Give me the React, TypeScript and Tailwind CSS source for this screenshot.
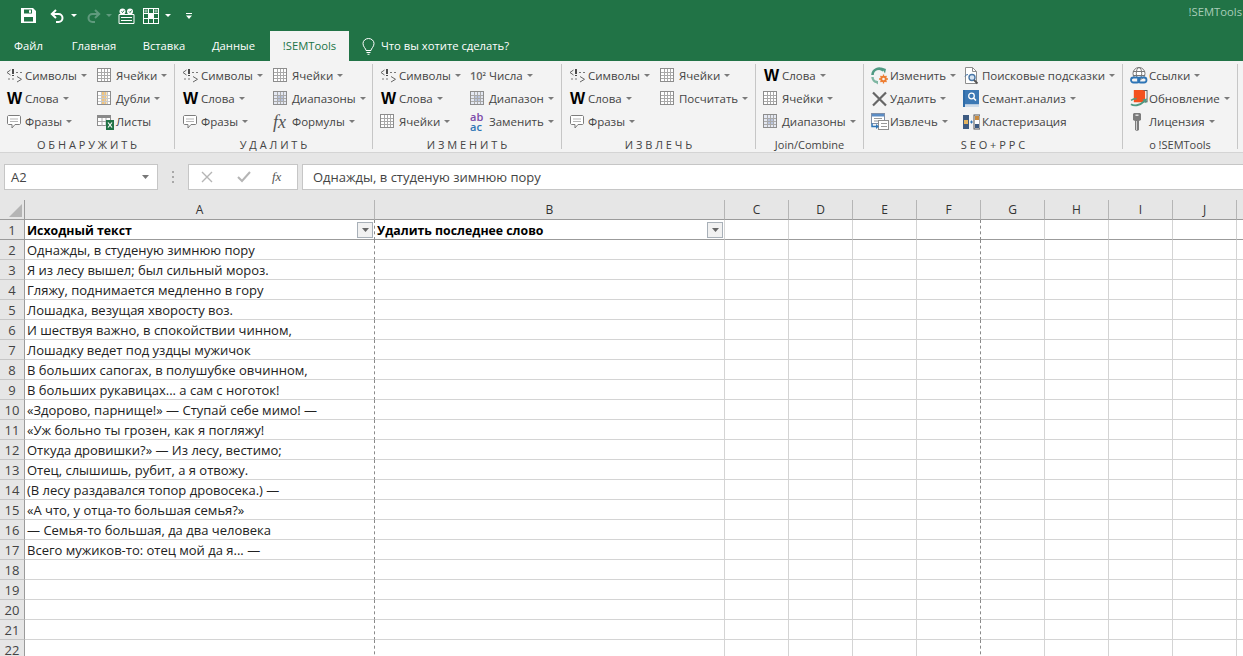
import type { ReactNode } from 'react';

const poem = [
  'Однажды, в студеную зимнюю пору',
  'Я из лесу вышел; был сильный мороз.',
  'Гляжу, поднимается медленно в гору',
  'Лошадка, везущая хворосту воз.',
  'И шествуя важно, в спокойствии чинном,',
  'Лошадку ведет под уздцы мужичок',
  'В больших сапогах, в полушубке овчинном,',
  'В больших рукавицах... а сам с ноготок!',
  '«Здорово, парнище!» — Ступай себе мимо! —',
  '«Уж больно ты грозен, как я погляжу!',
  'Откуда дровишки?» — Из лесу, вестимо;',
  'Отец, слышишь, рубит, а я отвожу.',
  '(В лесу раздавался топор дровосека.) —',
  '«А что, у отца-то большая семья?»',
  '— Семья-то большая, да два человека',
  'Всего мужиков-то: отец мой да я... —',
];

const extraCols = ['C', 'D', 'E', 'F', 'G', 'H', 'I', 'J', ''];

function Caret({ color = '#7a7a7a', big = false }: { color?: string; big?: boolean }) {
  return (
    <svg width={big ? 7 : 6} height={big ? 4 : 3} viewBox="0 0 7 4" preserveAspectRatio="none" className="shrink-0">
      <path d="M0 0h7L3.5 4z" fill={color} />
    </svg>
  );
}

/* ribbon icons */
const SymbolsIcon = () => (
  <svg width="17" height="16" viewBox="0 0 17 16" fill="none">
    <path d="M4.500 2 1 4.500 4.500 7" stroke="#666" />
    <path d="M7 1v5M7 7v1" stroke="#222" strokeWidth="1.600" />
    <path d="M10 4.500h2M14 4.500h2M2 11h2M6 11h2" stroke="#777" />
    <path d="M11 8.500l4.500 2.800L11 14" stroke="#666" />
  </svg>
);

const WordIcon = () => (
  <span className="ml-px block text-[16px] leading-4 font-bold text-black font-['Liberation_Sans',sans-serif]">W</span>
);

const PhraseIcon = () => (
  <svg width="16" height="16" viewBox="0 0 16 16" fill="none">
    <path d="M2.500 1.500h11a1.500 1.500 0 0 1 1 1v7a1.500 1.500 0 0 1-1 1H9l-3 3.500v-3.500H2.500a1.500 1.500 0 0 1-1-1v-7a1.500 1.500 0 0 1 1-1z" stroke="#7d7d7d" fill="#fff" />
    <path d="M4 5h8M4 7.500h8" stroke="#b5b5b5" />
  </svg>
);

function CellsIcon({ variant = 'plain' }: { variant?: 'plain' | 'orange' | 'blue' }) {
  const lines = [4, 7, 10];
  return (
    <svg width="15" height="15" viewBox="0 0 15 15" fill="none">
      <rect x="0.500" y="0.500" width="13" height="13" fill={variant === 'blue' ? '#e4e8f2' : '#fff'} stroke="#8d8d8d" />
      {variant === 'orange' && <rect x="5" y="1" width="4.500" height="12" fill="#f2c47c" />}
      {variant === 'blue' && <rect x="4" y="4" width="6" height="6" fill="#b9c4dc" />}
      {lines.map((p) => (
        <path key={p} d={`M${p + 0.5} 1v12M1 ${p + 0.5}h12`} stroke={variant === 'orange' ? '#c9c9c9' : '#a9a9a9'} />
      ))}
    </svg>
  );
}

const SheetsIcon = () => (
  <svg width="18" height="16" viewBox="0 0 18 16" fill="none">
    <rect x="0.500" y="1.500" width="13" height="10" fill="#fff" stroke="#8d8d8d" />
    <rect x="0" y="1" width="14" height="3" fill="#8a8a8a" />
    <path d="M5 4v8M9 4v8M1 7.500h12" stroke="#aaa" />
    <rect x="9" y="6" width="8" height="10" fill="#217346" />
    <path d="M11 8.500l4 5M15 8.500l-4 5" stroke="#fff" strokeWidth="1.200" />
  </svg>
);

const FxIcon = () => (
  <span className="block text-[18px] leading-4 italic text-[#555] font-['Liberation_Serif',serif]">fx</span>
);

const TenIcon = () => (
  <span className="flex items-start text-[11px] leading-3 font-semibold text-[#666] font-['Open_Sans',sans-serif]">
    10<span className="text-[6px] leading-2 font-normal text-black">2</span>
  </span>
);

const ReplaceIcon = () => (
  <span className="flex flex-col text-[11px] leading-[10px] font-semibold font-['Open_Sans',sans-serif]">
    <span className="text-[#7b4aa8]">ab</span>
    <span className="text-[#2e75b6]">ac</span>
  </span>
);

const ChangeIcon = () => (
  <svg width="18" height="18" viewBox="0 0 18 18" fill="none">
    <path d="M1.500 8A6.500 6.500 0 0 1 12.500 3.500" stroke="#4f9a83" strokeWidth="2.600" />
    <path d="M10.500 0.500l4.500 1.500-1 4.500z" fill="#4f9a83" />
    <path d="M1.500 10A5 5 0 0 0 6 15" stroke="#7fb7a3" strokeWidth="2.400" />
    <path d="M2.500 14h4.500v3.500z" fill="#7fb7a3" />
    <circle cx="12.500" cy="12" r="3.200" fill="#ed7d31" />
    <path d="M12.500 7.500v9M8 12h9M9.500 9l6 6M15.500 9l-6 6" stroke="#ed7d31" strokeWidth="1.300" />
    <circle cx="12.500" cy="12" r="1.300" fill="#f3f3f3" />
  </svg>
);

const CrossIcon = () => (
  <svg width="17" height="16" viewBox="0 0 17 16" fill="none">
    <path d="M2 1.500l13 13M15 1.500l-13 13" stroke="#666" strokeWidth="2.200" />
  </svg>
);

const ExtractIcon = () => (
  <svg width="18" height="17" viewBox="0 0 18 17" fill="none">
    <rect x="0.500" y="0.500" width="13" height="10" fill="#fff" stroke="#7f8fa8" />
    <rect x="1" y="1" width="12" height="2.500" fill="#5b8cc4" />
    <path d="M3 5.500h8M3 8h5" stroke="#999" />
    <rect x="7.500" y="7.500" width="10" height="9" fill="#fff" stroke="#8d8d8d" />
    <path d="M10 10.500h6M10 13.500h6" stroke="#999" />
    <path d="M1 10.500v3h5" stroke="#2e75b6" strokeWidth="1.500" />
    <path d="M5 11l3 2.500L5 16z" fill="#2e75b6" />
  </svg>
);

const SearchDocIcon = () => (
  <svg width="17" height="18" viewBox="0 0 17 18" fill="none">
    <path d="M2.500 0.500h7l4 4v12h-11z" fill="#fff" stroke="#8d8d8d" />
    <path d="M9.500 0.500v4h4" stroke="#8d8d8d" />
    <circle cx="9" cy="10.500" r="3" fill="#d5e3f1" stroke="#4a78a8" strokeWidth="1.400" />
    <path d="M11 13l3.500 3.500" stroke="#555" strokeWidth="1.800" />
    <path d="M2 9.500a3 3 0 0 1 3-2" stroke="#4a78a8" />
  </svg>
);

const BookIcon = () => (
  <svg width="16" height="17" viewBox="0 0 16 17" fill="none">
    <rect x="0" y="0" width="2" height="17" fill="#2f6ca8" />
    <rect x="2" y="0" width="14" height="14.500" fill="#3c78b4" />
    <rect x="2" y="14.500" width="14" height="2.500" fill="#cfdcea" />
    <circle cx="8.500" cy="6" r="2.800" stroke="#fff" strokeWidth="1.300" />
    <path d="M10.500 8l2.500 2.500" stroke="#fff" strokeWidth="1.500" />
  </svg>
);

const ClusterIcon = () => (
  <svg width="17" height="16" viewBox="0 0 17 16" fill="none">
    <rect x="0" y="1" width="6" height="14" fill="#3d5a80" />
    <rect x="1" y="6" width="4" height="4" fill="#e3b35f" />
    <rect x="11" y="1" width="6" height="14" fill="#fff" stroke="#555" />
    <rect x="12" y="2" width="4" height="4" fill="#c98a3c" />
    <rect x="12" y="10" width="4" height="4" fill="#3d5a80" />
    <path d="M7 8h3M8.500 6.500v3" stroke="#2e75b6" />
  </svg>
);

const LinksIcon = () => (
  <svg width="18" height="18" viewBox="0 0 18 18" fill="none">
    <circle cx="9" cy="6.500" r="6" fill="#fff" stroke="#777" />
    <ellipse cx="9" cy="6.500" rx="2.700" ry="6" stroke="#777" />
    <path d="M3 4.500h12M3 8.500h12" stroke="#777" />
    <rect x="1" y="10.500" width="8.500" height="5" rx="2.500" stroke="#2e75b6" strokeWidth="1.800" fill="#f3f3f3" />
    <rect x="8" y="10.500" width="8.500" height="5" rx="2.500" stroke="#2e75b6" strokeWidth="1.800" />
  </svg>
);

const UpdateIcon = () => (
  <svg width="18" height="17" viewBox="0 0 19 18" fill="none">
    <rect x="12" y="0.500" width="6" height="12" fill="#fff" stroke="#555" />
    <path d="M4 0h9l3 1v10l-4 2H4z" fill="#f4511e" />
    <path d="M1 15c3 2 9 2 14-3" stroke="#4f9a83" strokeWidth="2" />
    <path d="M13 10l5-1-1 5z" fill="#4f9a83" />
    <path d="M1 11c2-1.500 4-2 6-2" stroke="#4f9a83" strokeWidth="1.500" />
  </svg>
);

const KeyIcon = () => (
  <svg width="14" height="18" viewBox="0 0 14 18" fill="none">
    <path d="M4 0h6l1 1v6l-2 1v9l-2 1-2-1V8L3 7V1z" fill="#7c7c7c" />
    <rect x="5.500" y="1.500" width="3" height="1.500" fill="#ddd" />
    <path d="M6.500 8v9" stroke="#d0d0d0" />
  </svg>
);

function Item({ icon, label, caret = true }: { icon: ReactNode; label: string; caret?: boolean }) {
  return (
    <div className="flex h-[23px] items-center">
      <div className="flex h-[18px] w-[19px] shrink-0 items-center">{icon}</div>
      <span className="whitespace-nowrap">{label}</span>
      {caret && (
        <span className="ml-[4px]">
          <Caret />
        </span>
      )}
    </div>
  );
}

function Group({ title, width, pad = 'pl-[7px]', first, second, firstWidth }: {
  title: string;
  width: string;
  pad?: string;
  first: ReactNode;
  second?: ReactNode;
  firstWidth?: string;
}) {
  return (
    <div className={`flex h-[85px] shrink-0 flex-col border-r border-[#c6c6c6] ${width}`}>
      <div className={`flex h-[69px] shrink-0 ${pad}`}>
        <div className={`flex flex-col ${firstWidth ?? ''}`}>{first}</div>
        {second && <div className="flex flex-col">{second}</div>}
      </div>
      <div className="mt-1 flex h-[16px] shrink-0 items-center justify-center whitespace-nowrap text-[11px] leading-4 text-[#444]">{title}</div>
    </div>
  );
}

function FilterButton() {
  return (
    <span className="flex h-4 w-4 shrink-0 items-center justify-center border border-[#a8b0b8] bg-[#f1f1f1]">
      <Caret color="#666" big />
    </span>
  );
}

export default function App() {
  return (
    <div className="h-[656px] w-[1243px] overflow-hidden bg-white font-['Open_Sans',sans-serif] text-[11.5px] text-[#444]">
      {/* quick access */}
      <div className="flex h-[31px] items-center justify-between bg-[#217346] pl-[21px]">
        <div className="flex items-center">
          <svg width="15" height="15" viewBox="0 0 15 15">
            <path fillRule="evenodd" d="M0 0h12l3 3v12H0zM3 1.500v4h8v-4zM3 9v4.500h9V9zM8 2.200h2v2.600H8z" fill="#fff" />
          </svg>
          <svg width="16" height="14" viewBox="0 0 16 14" fill="none" className="ml-[14px]">
            <path d="M6 1 1.800 5 6 9" stroke="#fff" strokeWidth="2" />
            <path d="M2 5h6.500a4 4 0 0 1 0 8H6" stroke="#fff" strokeWidth="2" />
          </svg>
          <span className="ml-[5px]"><Caret color="#fff" /></span>
          <svg width="16" height="14" viewBox="0 0 16 14" fill="none" className="ml-[8px]">
            <path d="M10 1l4.200 4L10 9" stroke="#5f9a7d" strokeWidth="2" />
            <path d="M14 5H7.500a4 4 0 0 0 0 8H10" stroke="#5f9a7d" strokeWidth="2" />
          </svg>
          <span className="ml-[5px]"><Caret color="#5f9a7d" /></span>
          <svg width="17" height="16" viewBox="0 0 17 16" fill="none" className="ml-[6px]">
            <path d="M1 6.500h15v9H1z" stroke="#fff" />
            <path d="M3 9.500h11M3 12.500h11" stroke="#fff" />
            <circle cx="4.500" cy="3.500" r="3" fill="#fff" />
            <circle cx="12" cy="3.500" r="3" fill="#fff" />
            <path d="M3.500 3.500l1 1 1.500-2M11 3.500l1 1 1.500-2" stroke="#217346" />
          </svg>
          <svg width="17" height="16" viewBox="0 0 17 16" fill="none" className="ml-[8px]">
            <rect x="0.500" y="0.500" width="15" height="15" stroke="#fff" />
            <path d="M5.500 1v14M10.500 1v14M1 5.500h14M1 10.500h14" stroke="#fff" />
            <rect x="6" y="6" width="4.500" height="4.500" fill="#fff" />
            <rect x="1.500" y="1.500" width="3" height="3" fill="#8fbba3" />
            <rect x="11.500" y="1.500" width="3" height="3" fill="#8fbba3" />
          </svg>
          <span className="ml-[5px]"><Caret color="#fff" /></span>
          <svg width="6" height="6" viewBox="0 0 6 6" className="ml-[15px]">
            <path d="M0 0h6v1H0zM0 2.500h6L3 6z" fill="#fff" />
          </svg>
        </div>
        <span className="pr-px pb-[6px] text-[11.25px] whitespace-nowrap text-[#a9cdb9]">!SEMTools</span>
      </div>

      {/* tabs */}
      <div className="flex h-[30px] items-end bg-[#217346] text-center text-[11.25px] text-white">
        <div className="h-[30px] w-[57px] leading-[29px]">Файл</div>
        <div className="h-[30px] w-[74px] leading-[29px]">Главная</div>
        <div className="h-[30px] w-[66px] leading-[29px]">Вставка</div>
        <div className="h-[30px] w-[73px] leading-[29px]">Данные</div>
        <div className="h-[30px] w-[79px] bg-[#f3f3f3] leading-[29px] text-[#217346]">!SEMTools</div>
        <div className="ml-[13px] flex h-[30px] items-center gap-[6px]">
          <svg width="13" height="17" viewBox="0 0 13 17" fill="none">
            <path d="M4 12.500c0-2-3-3.500-3-7a5.500 5 0 0 1 11 0c0 3.500-3 5-3 7z" stroke="#fff" />
            <path d="M4.500 14.500h4M5.500 16.300h2" stroke="#fff" />
          </svg>
          <span>Что вы хотите сделать?</span>
        </div>
      </div>

      {/* ribbon */}
      <div className="flex h-[92px] items-start border-b border-[#d4d4d4] bg-[#f3f3f3] pt-[3px]">
        <Group
          title="О Б Н А Р У Ж И Т Ь"
          width="w-[175px]"
          pad="pl-[6px]"
          firstWidth="w-[91px]"
          first={<>
            <Item icon={<SymbolsIcon />} label="Символы" />
            <Item icon={<WordIcon />} label="Слова" />
            <Item icon={<PhraseIcon />} label="Фразы" />
          </>}
          second={<>
            <Item icon={<CellsIcon />} label="Ячейки" />
            <Item icon={<CellsIcon variant="orange" />} label="Дубли" />
            <Item icon={<SheetsIcon />} label="Листы" caret={false} />
          </>}
        />
        <Group
          title="У Д А Л И Т Ь"
          width="w-[198px]"
          firstWidth="w-[91px]"
          first={<>
            <Item icon={<SymbolsIcon />} label="Символы" />
            <Item icon={<WordIcon />} label="Слова" />
            <Item icon={<PhraseIcon />} label="Фразы" />
          </>}
          second={<>
            <Item icon={<CellsIcon />} label="Ячейки" />
            <Item icon={<CellsIcon variant="blue" />} label="Диапазоны" />
            <Item icon={<FxIcon />} label="Формулы" />
          </>}
        />
        <Group
          title="И З М Е Н И Т Ь"
          width="w-[189px]"
          firstWidth="w-[90px]"
          first={<>
            <Item icon={<SymbolsIcon />} label="Символы" />
            <Item icon={<WordIcon />} label="Слова" />
            <Item icon={<CellsIcon />} label="Ячейки" />
          </>}
          second={<>
            <Item icon={<TenIcon />} label="Числа" />
            <Item icon={<CellsIcon variant="blue" />} label="Диапазон" />
            <Item icon={<ReplaceIcon />} label="Заменить" />
          </>}
        />
        <Group
          title="И З В Л Е Ч Ь"
          width="w-[194px]"
          firstWidth="w-[91px]"
          first={<>
            <Item icon={<SymbolsIcon />} label="Символы" />
            <Item icon={<WordIcon />} label="Слова" />
            <Item icon={<PhraseIcon />} label="Фразы" />
          </>}
          second={<>
            <Item icon={<CellsIcon />} label="Ячейки" />
            <Item icon={<CellsIcon />} label="Посчитать" />
          </>}
        />
        <Group
          title="Join/Combine"
          width="w-[108px]"
          first={<>
            <Item icon={<WordIcon />} label="Слова" />
            <Item icon={<CellsIcon />} label="Ячейки" />
            <Item icon={<CellsIcon variant="blue" />} label="Диапазоны" />
          </>}
        />
        <Group
          title="S E O + P P C"
          width="w-[259px]"
          firstWidth="w-[92px]"
          first={<>
            <Item icon={<ChangeIcon />} label="Изменить" />
            <Item icon={<CrossIcon />} label="Удалить" />
            <Item icon={<ExtractIcon />} label="Извлечь" />
          </>}
          second={<>
            <Item icon={<SearchDocIcon />} label="Поисковые подсказки" />
            <Item icon={<BookIcon />} label="Семант.анализ" />
            <Item icon={<ClusterIcon />} label="Кластеризация" caret={false} />
          </>}
        />
        <Group
          title="о !SEMTools"
          width="w-[115px]"
          first={<>
            <Item icon={<LinksIcon />} label="Ссылки" />
            <Item icon={<UpdateIcon />} label="Обновление" />
            <Item icon={<KeyIcon />} label="Лицензия" />
          </>}
        />
      </div>

      {/* formula bar */}
      <div className="flex h-[47px] items-start bg-[#e6e6e6] pl-1 pt-[11px]">
        <div className="flex h-[26px] w-[154px] items-center justify-between border border-[#c6c6c6] bg-white pl-[6px] pr-2 text-[13px]">
          <span className="pt-px">A2</span>
          <Caret color="#777" big />
        </div>
        <div className="flex h-[26px] w-[30px] flex-col items-center justify-center gap-[3px]">
          <span className="h-[2px] w-[2px] bg-[#a8a8a8]" />
          <span className="h-[2px] w-[2px] bg-[#a8a8a8]" />
          <span className="h-[2px] w-[2px] bg-[#a8a8a8]" />
        </div>
        <div className="flex h-[26px] w-[110px] items-center border border-[#c6c6c6] bg-white pl-3">
          <svg width="12" height="12" viewBox="0 0 12 12" fill="none">
            <path d="M1 1l10 10M11 1L1 11" stroke="#b5b5b5" strokeWidth="1.400" />
          </svg>
          <svg width="14" height="12" viewBox="0 0 14 12" fill="none" className="ml-[24px]">
            <path d="M1 6l4 4 8-9" stroke="#b5b5b5" strokeWidth="2" />
          </svg>
          <span className="ml-[21px] text-[13px] italic text-[#555] font-['Liberation_Serif',serif]">fx</span>
        </div>
        <div className="ml-1 flex h-[26px] flex-1 items-center border border-r-0 border-[#c6c6c6] bg-white pl-[10px] pt-px text-[13px]">
          Однажды, в студеную зимнюю пору
        </div>
      </div>

      {/* sheet */}
      <div className="grid grid-cols-[25px_350px_350px_repeat(9,64px)] auto-rows-[20px] overflow-hidden text-[13px] leading-[19px]">
        <div className="flex items-end justify-end border-r border-b border-[#9b9b9b] bg-[#e6e6e6] pb-[2px] pr-[2px]">
          <svg width="13" height="13" viewBox="0 0 13 13">
            <path d="M13 0v13H0z" fill="#b5b5b5" />
          </svg>
        </div>
        {['A', 'B', ...extraCols].map((c) => (
          <div key={c} className="flex items-center justify-center border-r border-b border-r-[#b5b5b5] border-b-[#9b9b9b] bg-[#e6e6e6] text-[12px] text-[#333]">
            {c}
          </div>
        ))}

        <div className="flex items-center justify-center border-r border-b border-[#9b9b9b] bg-[#e6e6e6] pt-px">1</div>
        <div className="flex items-center justify-between border-r border-b border-r-[#8a8a8a] border-b-[#9b9b9b] pl-[2px] pr-px text-[12.3px] font-bold text-black [border-right-style:dashed]">
          <span className="pt-px">Исходный текст</span>
          <FilterButton />
        </div>
        <div className="flex items-center justify-between border-r border-b border-r-[#d4d4d4] border-b-[#9b9b9b] pl-[2px] pr-px text-[12.3px] font-bold text-black">
          <span className="pt-px">Удалить последнее слово</span>
          <FilterButton />
        </div>
        {extraCols.map((c) => (
          <div key={c} className={`border-r border-b border-b-[#9b9b9b] ${c === 'F' ? 'border-r-[#8a8a8a] [border-right-style:dashed]' : 'border-r-[#d4d4d4]'}`} />
        ))}

        {Array.from({ length: 21 }, (_, i) => i + 2).map((row) => (
          <div key={row} className="contents">
            <div className="flex items-center justify-center border-r border-b border-r-[#9b9b9b] border-b-[#c6c6c6] bg-[#e6e6e6] pt-px">{row}</div>
            <div className="whitespace-nowrap border-r border-b border-b-[#d4d4d4] border-r-[#8a8a8a] pl-[2px] pt-px text-[#222] [border-right-style:dashed]">
              {poem[row - 2] ?? ''}
            </div>
            <div className="border-r border-b border-[#d4d4d4]" />
            {extraCols.map((c) => (
              <div key={c} className={`border-r border-b border-b-[#d4d4d4] ${c === 'F' ? 'border-r-[#8a8a8a] [border-right-style:dashed]' : 'border-r-[#d4d4d4]'}`} />
            ))}
          </div>
        ))}
      </div>
    </div>
  );
}
